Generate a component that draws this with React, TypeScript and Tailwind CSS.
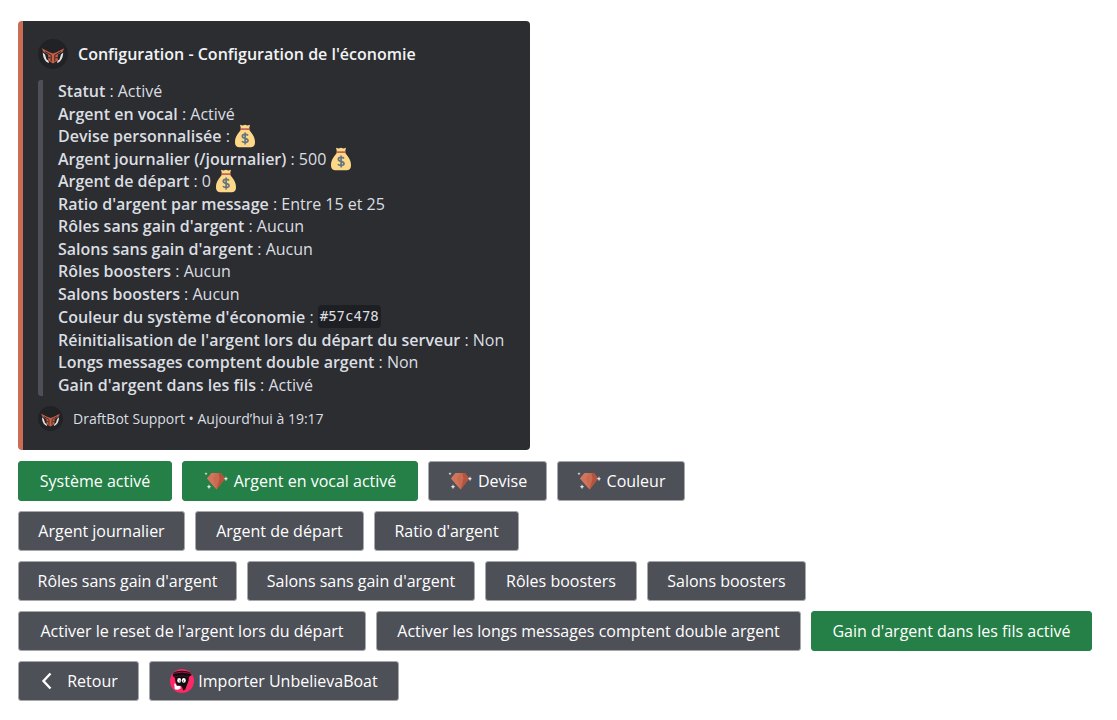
import type { ReactNode } from "react";

function DraftBotLogo({ className }: { className: string }) {
  return (
    <svg viewBox="0 0 30 30" className={className} aria-hidden="true">
      <circle cx="15" cy="15" r="15" fill="#202225" />
      <path d="M4.8 13.5 C5 19 7 22.8 11 24 L10.4 21.8 L8.4 20.2 L7 15.5Z M25.2 13.5 C25 19 23 22.8 19 24 L19.6 21.8 L21.6 20.2 L23 15.5Z" fill="#e6e4e2" />
      <path d="M3.8 9.3 L11.5 13.2 L15 14.5 L18.5 13.2 L26.2 9.3 L24.6 12.8 L19.8 15.8 V21.5 L15 24.5 L10.2 21.5 V15.8 L5.4 12.8Z" fill="#c95f45" />
      <path d="M7 12.6 L13.2 16.2 V22.5 M23 12.6 L16.8 16.2 V22.5 M10.2 18.7 H12.6 M19.8 18.7 H17.4" stroke="#302728" strokeWidth="1" fill="none" />
    </svg>
  );
}

function MoneyBag() {
  return (
    <svg viewBox="0 0 22 24" className="-my-px h-6 w-[22px] shrink-0" role="img" aria-label="Argent">
      <path d="M6 0.8 L8.5 1.5 L11 0.7 L13.5 1.5 L16 0.8 L15 5 H7Z" fill="#fdd888" />
      <path d="M7 5.6 C5 9 1 12 1 18 C1 22.3 3.2 23.3 6 23.3 H16 C19 23.3 21 22.3 21 18 C21 12 17 9 15 5.6Z" fill="#fdd888" />
      <rect x="6" y="4.2" width="10" height="1.7" rx="0.8" fill="#bf6952" />
      <path d="M14 11.4 C13 10 8.3 9.6 8.3 12.2 C8.3 15 14 13.6 14 16.6 C14 19.3 9 19 8 17.2 M11.1 8.4 V20.6" fill="none" stroke="#67757f" strokeWidth="1.7" />
    </svg>
  );
}

function Gem() {
  return (
    <svg viewBox="0 0 24 20" className="mr-0.5 h-5 w-6 shrink-0" aria-hidden="true">
      <path d="M7.5 2 H17 L21 7.5 L12.7 18.5 L3 7.5Z" fill="#c96a51" />
      <path d="M7.5 2 H12 L9 7.5 L12.7 18.5 L3 7.5Z" fill="#d0745b" />
      <path d="M14.5 2 H17 L21 7.5 L12.7 18.5 L15.5 7.5Z" fill="#b4543c" />
      <path d="M22 5.3 L22.7 7.1 L24 7.8 L22.7 8.5 L22 10.3 L21.3 8.5 L19.7 7.8 L21.3 7.1Z M5 13.2 L5.7 15 L7.3 15.7 L5.7 16.4 L5 18.2 L4.3 16.4 L2.7 15.7 L4.3 15Z M2 1.2 L2.5 2.2 L3.5 2.7 L2.5 3.2 L2 4.2 L1.5 3.2 L0.5 2.7 L1.5 2.2Z" fill="#e2e8e4" />
    </svg>
  );
}

function BoatLogo() {
  return (
    <svg viewBox="0 0 24 24" className="h-6 w-6 shrink-0" aria-hidden="true">
      <circle cx="12" cy="12" r="12" fill="#ff2765" />
      <path d="M3 4 C8 1 16 1 21 4 L21.6 6.2 L19 7.5 L18.5 12 L15.2 20.5 L13.2 21.5 L12 17.5 L7 16.5 L5.4 12.5 L5 9 L2.8 7Z" fill="#120b10" />
      <path d="M3 4.4 Q12 1.8 21 4.4" stroke="#a11c45" strokeWidth="0.9" fill="none" />
      <path d="M4 7.6 Q12 6 20 7.6" stroke="#5c1630" strokeWidth="0.7" fill="none" />
      <ellipse cx="9.2" cy="11.4" rx="2" ry="2.4" fill="#fff" />
      <ellipse cx="13.8" cy="11.4" rx="2" ry="2.4" fill="#fff" />
      <path d="M9.4 11.4 h1 v1.2 h-1Z M12.9 11.4 h1 v1.2 h-1Z" fill="#120b10" />
      <path d="M4.2 14.6 L5.6 14.8 L6.8 17 L10.4 16.8 L10.6 19.4 L7.8 20.8 L4.8 20.2Z" fill="#fff" />
    </svg>
  );
}

function Chevron() {
  return (
    <svg viewBox="0 0 20 20" className="mr-1 h-5 w-5 shrink-0" aria-hidden="true">
      <path d="M11.5 2.5 L4.5 10 L11.5 17.5" fill="none" stroke="#fff" strokeWidth="2.4" />
    </svg>
  );
}

type Setting = { label: string; value: ReactNode };

const settings: Setting[] = [
  { label: "Statut", value: "Activé" },
  { label: "Argent en vocal", value: "Activé" },
  { label: "Devise personnalisée", value: <MoneyBag /> },
  { label: "Argent journalier (/journalier)", value: <>500 <MoneyBag /></> },
  { label: "Argent de départ", value: <>0 <MoneyBag /></> },
  { label: "Ratio d'argent par message", value: "Entre 15 et 25" },
  { label: "Rôles sans gain d'argent", value: "Aucun" },
  { label: "Salons sans gain d'argent", value: "Aucun" },
  { label: "Rôles boosters", value: "Aucun" },
  { label: "Salons boosters", value: "Aucun" },
  {
    label: "Couleur du système d'économie",
    value: (
      <code className="rounded bg-[#1e1f22] px-0.5 font-['DejaVu_Sans_Mono',monospace] text-sm leading-[23px]">#57c478</code>
    ),
  },
  { label: "Réinitialisation de l'argent lors du départ du serveur", value: "Non" },
  { label: "Longs messages comptent double argent", value: "Non" },
  { label: "Gain d'argent dans les fils", value: "Activé" },
];

type Action = { label: string; size: string; icon?: ReactNode; active?: boolean };

const actionRows: Action[][] = [
  [
    { label: "Système activé", size: "min-w-[154px]", active: true },
    { label: "Argent en vocal activé", size: "min-w-[236px]", icon: <Gem />, active: true },
    { label: "Devise", size: "min-w-[119px]", icon: <Gem /> },
    { label: "Couleur", size: "min-w-[128px]", icon: <Gem /> },
  ],
  [
    { label: "Argent journalier", size: "min-w-[167px]" },
    { label: "Argent de départ", size: "min-w-[169px]" },
    { label: "Ratio d'argent", size: "min-w-[145px]" },
  ],
  [
    { label: "Rôles sans gain d'argent", size: "min-w-[219px]" },
    { label: "Salons sans gain d'argent", size: "min-w-[228px]" },
    { label: "Rôles boosters", size: "min-w-[152px]" },
    { label: "Salons boosters", size: "min-w-[159px]" },
  ],
  [
    { label: "Activer le reset de l'argent lors du départ", size: "min-w-[348px]" },
    { label: "Activer les longs messages comptent double argent", size: "min-w-[425px]" },
    { label: "Gain d'argent dans les fils activé", size: "min-w-[281px]", active: true },
  ],
  [
    { label: "Retour", size: "min-w-[121px]", icon: <Chevron /> },
    { label: "Importer UnbelievaBoat", size: "min-w-[250px]", icon: <BoatLogo /> },
  ],
];

function ActionButton({ label, size, icon, active }: Action) {
  const tone = active ? "border-[#248046] bg-[#248046]" : "border-[#a7a8ac] bg-[#4e5058]";
  return (
    <button
      type="button"
      className={`flex h-10 items-center justify-center gap-1 rounded-[3px] border px-4 text-base font-medium whitespace-nowrap text-white ${size} ${tone}`}
    >
      {icon}
      <span>{label}</span>
    </button>
  );
}

export default function App() {
  return (
    <main className="min-h-screen bg-white px-[18px] pt-[21px] font-['Open_Sans','Noto_Sans',sans-serif]">
      <article className="w-fit min-w-[512px] rounded-[4px] border-l-[5px] border-[#cb6d55] bg-[#2b2d31] pt-[18px] pr-6 pb-[19px] pl-[15px] text-[#dbdee1]">
        <header className="flex items-center gap-2.5">
          <DraftBotLogo className="h-[30px] w-[30px]" />
          <h1 className="text-base font-semibold text-[#f2f3f5]">Configuration - Configuration de l'économie</h1>
        </header>
        <ul className="mt-[11px] flex flex-col rounded-l-[3px] border-l-[5px] border-[#4e5058] pl-[15px] text-base">
          {settings.map(({ label, value }) => (
            <li key={label} className="flex items-center whitespace-pre leading-[22px] odd:min-h-[22px] even:min-h-[23px]">
              <strong className="font-semibold">{label}</strong> : {value}
            </li>
          ))}
        </ul>
        <footer className="mt-2.5 flex items-center gap-2.5 text-sm font-medium">
          <DraftBotLogo className="h-[25px] w-[25px]" />
          <p>DraftBot Support • Aujourd’hui à 19:17</p>
        </footer>
      </article>
      <section aria-label="Actions" className="mt-[11px] flex flex-col gap-2.5">
        {actionRows.map((row) => (
          <div key={row[0].label} className="flex flex-wrap gap-2.5">
            {row.map((action) => (
              <ActionButton key={action.label} {...action} />
            ))}
          </div>
        ))}
      </section>
    </main>
  );
}
